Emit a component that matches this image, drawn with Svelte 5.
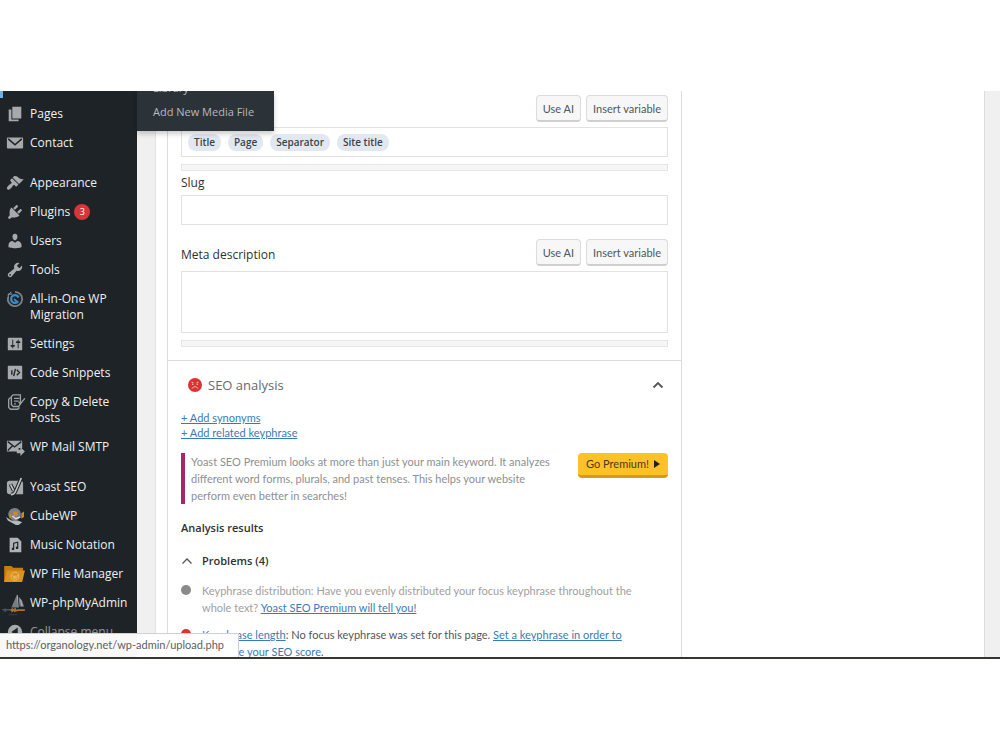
<script>
    const menu = [
        {
            label: 'Pages',
            shapes: [{ d: 'M7 2h10v13H7zM3 5h3v11h8v2H3z' }]
        },
        {
            label: 'Contact',
            shapes: [
                { d: 'M2 4h16a1 1 0 0 1 1 1v10a1 1 0 0 1-1 1H2a1 1 0 0 1-1-1V5a1 1 0 0 1 1-1z' },
                { d: 'M2.500 5.500L10 12l7.500-6.500', line: '#1d2327', width: 1.8 }
            ]
        },
        {
            label: 'Appearance',
            separated: true,
            shapes: [{ d: 'M14.48 11.06L7.41 3.99l1.5-1.5c.5-.56 2.3-.47 3.51.32 1.21.8 1.43 1.28 2.91 2.1 1.18.64 2.45 1.26 4.45.85zm-.71.71L6.7 4.7 4.93 6.47c-.39.39-.39 1.02 0 1.41l1.06 1.06c.39.39.39 1.03 0 1.42-.6.6-1.43 1.11-2.21 1.69-.35.26-.7.53-1.01.84C1.43 14.23.4 16.08 1.4 17.07c.99 1 2.84-.03 4.18-1.36.31-.31.58-.66.85-1.02.57-.78 1.08-1.61 1.69-2.21.39-.39 1.02-.39 1.41 0l1.06 1.06c.39.39 1.02.39 1.41 0z' }]
        },
        {
            label: 'Plugins',
            count: 3,
            shapes: [{ d: 'M13.11 4.36L9.87 7.6 8 5.73l3.24-3.24c.35-.34 1.05-.2 1.56.32.52.51.66 1.21.31 1.55zm-8 1.77l.91-1.12 9.01 9.01-1.19.84c-.71.71-2.63 1.16-3.82 1.16H6.14L4.9 17.26c-.59.59-1.54.59-2.12 0-.59-.58-.59-1.53 0-2.12l1.24-1.24v-3.88c0-1.13.4-3.19 1.09-3.89zm7.26 3.97l3.24-3.24c.34-.35 1.04-.21 1.55.31.52.51.66 1.21.31 1.55l-3.24 3.25z' }]
        },
        {
            label: 'Users',
            shapes: [{ d: 'M10 9.25c-2.27 0-2.73-3.44-2.73-3.44C7 4.02 7.82 2 9.97 2c2.16 0 2.98 2.02 2.71 3.81 0 0-.41 3.44-2.68 3.44zm0 2.57L12.72 10c2.39 0 4.52 2.33 4.52 4.53v2.49s-3.65 1.13-7.24 1.13c-3.65 0-7.24-1.13-7.24-1.13v-2.49c0-2.25 1.94-4.48 4.47-4.48z' }]
        },
        {
            label: 'Tools',
            shapes: [{ d: 'M16.68 9.77c-1.34 1.34-3.3 1.67-4.95.99l-5.41 6.52c-.99.99-2.59.99-3.58 0s-.99-2.59 0-3.57l6.52-5.42c-.68-1.65-.35-3.61.99-4.95 1.28-1.28 3.12-1.62 4.72-1.06l-2.89 2.89 2.82 2.82 2.86-2.87c.53 1.58.18 3.39-1.08 4.65zM3.81 16.21c.4.39 1.04.39 1.43 0 .4-.4.4-1.04 0-1.43-.39-.4-1.03-.4-1.43 0-.39.39-.39 1.03 0 1.43z' }]
        },
        {
            label: 'All-in-One WP Migration',
            shapes: [
                { d: 'M10 2a8 8 0 1 1-7.8 6.2', line: '#7d8287', width: 2 },
                { d: 'M3 5l3-3M2.500 9V4.500H7', line: '#a7aaad', width: 1 },
                { d: 'M13.500 12.500A4.300 4.300 0 1 1 14 8.500', line: '#3a8cc6', width: 2.5 },
                { d: 'M9 10l3 3', line: '#3a8cc6', width: 2 }
            ]
        },
        {
            label: 'Settings',
            shapes: [{ d: 'M18 16V4c0-.55-.45-1-1-1H3c-.55 0-1 .45-1 1v12c0 .55.45 1 1 1h14c.55 0 1-.45 1-1zM8 11h1c.55 0 1 .45 1 1s-.45 1-1 1H8v1.5c0 .28-.22.5-.5.5s-.5-.22-.5-.5V13H6c-.55 0-1-.45-1-1s.45-1 1-1h1V5.5c0-.28.22-.5.5-.5s.5.22.5.5V11zm5-2h-1c-.55 0-1-.45-1-1s.45-1 1-1h1V5.5c0-.28.22-.5.5-.5s.5.22.5.5V7h1c.55 0 1 .45 1 1s-.45 1-1 1h-1v5.5c0 .28-.22.5-.5.5s-.5-.22-.5-.5V9z' }]
        },
        {
            label: 'Code Snippets',
            shapes: [
                { d: 'M3 2h14a1 1 0 0 1 1 1v13a1 1 0 0 1-1 1H3a1 1 0 0 1-1-1V3a1 1 0 0 1 1-1z' },
                { d: 'M6.500 7v5M10.500 5.500l-2 8M12 6.500l3 3-3 3', line: '#1d2327', width: 1.5 }
            ]
        },
        {
            label: 'Copy & Delete Posts',
            shapes: [
                { d: 'M8 2h8v10l-2 3H8L6 13V4zM5 5L3 7v9l2 2h8l2-2', line: '#9ca1a6', width: 1.5 },
                { d: 'M9 6h6M9 9h5M9 12h2M14 10l2 2 5-6', line: '#9ca1a6', width: 1.5 }
            ]
        },
        {
            label: 'WP Mail SMTP',
            shapes: [
                { d: 'M1 3h17v8h-4v4H1z' },
                { d: 'M2 4l7.500 6L17 4M2 14l5-5', line: '#1d2327', width: 1.5 },
                { d: 'M12 13h4v-3l5 5-5 5v-3h-4z' }
            ]
        },
        {
            label: 'Yoast SEO',
            separated: true,
            shapes: [
                { d: 'M4 3h12a3 3 0 0 1 3 3v12H4a3 3 0 0 1-3-3V6a3 3 0 0 1 3-3z' },
                { d: 'M5 7l3.500 7M17 0l-6.500 15c-1 2.500-2 3.500-5 3.500', line: '#1d2327', width: 4 },
                { d: 'M5 7l3.500 7M17 0l-6.500 15c-1 2.500-2 3.500-5 3.500', line: '#c3c6c9', width: 1.8 }
            ]
        },
        {
            label: 'CubeWP',
            shapes: [
                { d: 'M10 1a7 7 0 1 1-1 14A7 7 0 0 1 10 1z', fill: '#7c8084' },
                { d: 'M8 5h5v5H8zM17 7l3-2v6l-3 2zM4 8h2v4H4z', fill: '#c98a2d' },
                { d: 'M0 11l6 4h7l5 2-4 3h-3l-9-5z', fill: '#b5b9bd' },
                { d: 'M7 10l4 3 5-2', line: '#e2e4e6', width: 1.4 }
            ]
        },
        {
            label: 'Music Notation',
            shapes: [
                { d: 'M4 2h9l4 4v12H4z', fill: '#b0b3b6' },
                { d: 'M8.500 14V8l4.500-1v6', line: '#1d2327', width: 1.3 },
                { d: 'M6.500 13h2.500v2.500H6.500zM11 12h2.500v2.500H11z', fill: '#1d2327' }
            ]
        },
        {
            label: 'WP File Manager',
            shapes: [
                { d: 'M-2 1h8l2 2h11v4l-3 12H-2z', fill: '#c47d14' },
                { d: 'M1 6h20l-3 13H-2z', fill: '#dc921e' },
                { d: 'M10 8a4.500 4.500 0 1 1-.1 0M7.500 11l1.500 4 1-3 1 3 2-4', line: '#efbd6c', width: 1 }
            ]
        },
        {
            label: 'WP-phpMyAdmin',
            shapes: [
                { d: 'M12 1l1 14H6zM14 3c4 3 5 7 6 11h-5z', fill: '#777d82' },
                { d: 'M12.500 1l1 14M16 6l2 8', line: '#b8bcbf', width: 1 },
                { d: 'M-4 17.500h9M-1 16v4', line: '#4b566b', width: 1.5 },
                { d: 'M5 18l2-1v2l3-2v2l3-1h8', line: '#a87430', width: 2 },
                { d: 'M3 23h10', line: '#3b4249', width: 1 }
            ]
        },
        {
            label: 'Collapse menu',
            faded: true,
            shapes: [{ d: 'M10 2a8 8 0 1 1 0 16 8 8 0 0 1 0-16zM13 5l-7 5 7 5z' }]
        }
    ];

    const variables = ['Title', 'Page', 'Separator', 'Site title'];
    let slug = '';
    let description = '';
</script>

<div class="screen">
    <div class="admin">
        <nav class="sidebar">
            <ul>
                {#each menu as item}
                    <li class:separated={item.separated} class:faded={item.faded}>
                        <a href="#menu">
                            <svg class="icon" viewBox="0 0 20 20" aria-hidden="true">
                                {#each item.shapes as shape}
                                    <path
                                        d={shape.d}
                                        fill={shape.line ? 'none' : shape.fill || '#a7aaad'}
                                        fill-rule="evenodd"
                                        stroke={shape.line || 'none'}
                                        stroke-width={shape.width || 0}
                                    />
                                {/each}
                            </svg>
                            <span class="label">{item.label}</span>
                            {#if item.count}
                                <span class="count">{item.count}</span>
                            {/if}
                        </a>
                    </li>
                {/each}
            </ul>
            <div class="active-edge"></div>
            <div class="submenu">
                <a href="#library">Library</a>
                <a href="#upload">Add New Media File</a>
            </div>
        </nav>

        <main class="content">
            <section class="metabox">
                <div class="snippet">
                    <div class="toolbar">
                        <span></span>
                        <div class="buttons">
                            <button class="tool">Use AI</button>
                            <button class="tool">Insert variable</button>
                        </div>
                    </div>
                    <div class="field tags">
                        {#each variables as variable}
                            <span class="tag">{variable}</span>
                        {/each}
                    </div>
                    <div class="meter"></div>

                    <label class="heading slug" for="slug">Slug</label>
                    <input class="field" id="slug" type="text" bind:value={slug} />

                    <div class="toolbar spaced">
                        <label class="heading" for="description">Meta description</label>
                        <div class="buttons">
                            <button class="tool">Use AI</button>
                            <button class="tool">Insert variable</button>
                        </div>
                    </div>
                    <textarea class="field" id="description" bind:value={description}></textarea>
                    <div class="meter"></div>
                </div>

                <div class="analysis">
                    <button class="collapsible">
                        <svg class="face" viewBox="0 0 14 14" aria-hidden="true">
                            <circle cx="7" cy="7" r="7" fill="#dc3232" />
                            <path d="M3.500 4l2 .8M10.500 4l-2 .8M4 10.500c1-2.300 5-2.300 6 0" fill="none" stroke="#f7c4c0" stroke-width=".9" />
                            <circle cx="4.700" cy="6.200" r=".8" fill="#f7c4c0" />
                            <circle cx="9.300" cy="6.200" r=".8" fill="#f7c4c0" />
                        </svg>
                        <span>SEO analysis</span>
                        <svg class="chevron" viewBox="0 0 12 12" aria-hidden="true">
                            <path d="M1.500 8.500L6 4l4.500 4.500" fill="none" stroke="#50575e" stroke-width="1.800" />
                        </svg>
                    </button>

                    <div class="extras">
                        <a href="#synonyms">+ Add synonyms</a>
                        <a href="#related">+ Add related keyphrase</a>
                    </div>

                    <div class="promo">
                        <p>Yoast SEO Premium looks at more than just your main keyword. It analyzes different word forms, plurals, and past tenses. This helps your website perform even better in searches!</p>
                        <a class="premium" href="#premium">
                            Go Premium!
                            <svg viewBox="0 0 6 8" aria-hidden="true"><path d="M0 0l6 4-6 4z" fill="#222" /></svg>
                        </a>
                    </div>

                    <h3>Analysis results</h3>
                    <button class="problems">
                        <svg class="chevron" viewBox="0 0 12 12" aria-hidden="true">
                            <path d="M1.500 8.500L6 4l4.500 4.500" fill="none" stroke="#50575e" stroke-width="1.300" />
                        </svg>
                        Problems (4)
                    </button>
                    <ul class="results">
                        <li class="upsell">
                            <span class="bullet"></span>
                            <p>Keyphrase distribution: Have you evenly distributed your focus keyphrase throughout the whole text? <a href="#premium">Yoast SEO Premium will tell you!</a></p>
                        </li>
                        <li>
                            <span class="bullet bad"></span>
                            <p><a href="#length">Keyphrase length</a>: No focus keyphrase was set for this page. <a href="#calculate">Set a keyphrase in order to calculate your SEO score</a>.</p>
                        </li>
                    </ul>
                </div>
            </section>
        </main>
        <div class="gutter"></div>
        <div class="status">https://organology.net/wp-admin/upload.php</div>
    </div>
</div>

<style>
    :global(body) {
        background: #fff;
    }
    .screen {
        height: 100vh;
        padding: 91px 0;
        box-sizing: border-box;
        font: 11px/16px Lato, "Open Sans", sans-serif;
        color: #50575e;
    }
    .admin {
        height: 100%;
        box-sizing: border-box;
        display: flex;
        position: relative;
        overflow: hidden;
        border-bottom: 2px solid #35362f;
        background: #f0f0f1;
    }
    ul, p, h3 {
        margin: 0;
        padding: 0;
        list-style: none;
    }
    a {
        color: #3a7bb5;
    }
    button {
        font: inherit;
        color: inherit;
        cursor: pointer;
    }
    .sidebar,
    .tag,
    .heading,
    .collapsible,
    .problems,
    h3 {
        font-family: "Open Sans", "Noto Sans", sans-serif;
    }
    .sidebar {
        flex: 0 0 137px;
        background: #1d2327;
        padding-top: 9px;
        box-sizing: border-box;
    }
    .sidebar a {
        text-decoration: none;
    }
    .sidebar li a {
        display: flex;
        gap: 6px;
        padding: 6px 4px 7px 6px;
        font-size: 12px;
        color: #f0f0f1;
    }
    .separated {
        margin-top: 11px;
    }
    .faded .label {
        opacity: .55;
    }
    .icon {
        flex: none;
        width: 18px;
        height: 18px;
        margin: -1px 0;
        overflow: visible;
    }
    .count {
        width: 16px;
        height: 16px;
        margin-left: -2px;
        border-radius: 8px;
        background: #d63638;
        font-size: 9px;
        text-align: center;
        color: #fff;
    }
    .active-edge {
        position: absolute;
        top: 0;
        left: 0;
        width: 3px;
        height: 7px;
        background: #72aee6;
    }
    .submenu {
        position: absolute;
        z-index: 2;
        top: 0;
        left: 137px;
        width: 137px;
        height: 40px;
        box-sizing: border-box;
        padding: 0 16px 11px;
        display: flex;
        flex-direction: column;
        justify-content: flex-end;
        gap: 8px;
        overflow: hidden;
        white-space: nowrap;
        background: #2c3338;
        box-shadow: 0 3px 5px rgba(0, 0, 0, .2);
    }
    .submenu a {
        color: #b4b9be;
    }
    .content {
        flex: 1;
        margin-left: 18px;
        padding: 0 302px 0 11px;
        background: #fff;
        border-left: 1px solid #e2e2e2;
    }
    .metabox {
        border: solid #dcdcde;
        border-width: 0 1px;
    }
    .gutter {
        flex: 0 0 16px;
        box-sizing: border-box;
        border-left: 1px solid #dcdcde;
    }
    .snippet {
        padding: 4px 13px 13px;
        border-bottom: 1px solid #dcdcde;
    }
    .toolbar {
        display: flex;
        align-items: center;
        justify-content: space-between;
        margin-bottom: 5px;
    }
    .spaced {
        margin-top: 14px;
    }
    .spaced .heading {
        padding-top: 4px;
    }
    .buttons {
        display: flex;
        gap: 5px;
    }
    .tool {
        height: 27px;
        padding: 1px 6px 0;
        border: 1px solid #dcdcdc;
        border-bottom: 2px solid #cfcfcf;
        border-radius: 4px;
        background: #f7f7f7;
        white-space: nowrap;
    }
    .field {
        display: block;
        width: 100%;
        height: 30px;
        box-sizing: border-box;
        border: 1px solid #e2e2e2;
        border-radius: 0;
        background: #fff;
        font: inherit;
    }
    textarea.field {
        height: 62px;
        resize: none;
    }
    .tags {
        display: flex;
        align-items: center;
        gap: 7px;
        padding: 0 6px;
    }
    .tag {
        padding: 0 6px;
        border-radius: 8px;
        background: #e2e8f0;
        font-size: 10px;
        font-weight: 600;
        line-height: 17px;
        color: #3c434a;
    }
    .meter {
        height: 7px;
        margin-top: 7px;
        box-sizing: border-box;
        border: 1px solid #e6e6e6;
        background: #f6f6f6;
    }
    .heading {
        font-size: 12px;
        font-weight: 500;
        color: #303030;
    }
    .slug {
        display: block;
        margin: 4px 0;
    }
    .analysis {
        padding: 0 13px;
    }
    .collapsible {
        display: flex;
        align-items: center;
        gap: 6px;
        width: 100%;
        height: 48px;
        margin-bottom: 1px;
        padding: 0 4px 0 7px;
        border: 0;
        background: none;
        font-size: 13px;
        color: #646970;
    }
    .face {
        width: 14px;
        height: 14px;
    }
    .chevron {
        width: 12px;
        height: 12px;
    }
    .collapsible .chevron {
        margin-left: auto;
    }
    .extras {
        display: flex;
        flex-direction: column;
        align-items: flex-start;
        line-height: 15px;
    }
    .promo {
        display: flex;
        align-items: flex-start;
        justify-content: space-between;
        gap: 14px;
        margin: 13px 0 16px;
        color: #8c8f94;
    }
    .promo p {
        flex: 1;
        padding-left: 6px;
        border-left: 4px solid #a4286a;
        line-height: 17px;
    }
    .premium {
        display: flex;
        align-items: center;
        gap: 5px;
        height: 25px;
        box-sizing: border-box;
        padding: 0 8px;
        border-bottom: 3px solid #d99a1a;
        border-radius: 4px;
        background: #fec228;
        color: #4a3a18;
        text-decoration: none;
        white-space: nowrap;
    }
    .premium svg {
        width: 6px;
        height: 8px;
    }
    h3 {
        font-size: 11px;
        line-height: 16px;
        font-weight: 600;
        color: #303030;
    }
    .problems {
        display: flex;
        align-items: center;
        gap: 9px;
        margin: 17px 0 13px;
        padding: 0;
        border: 0;
        background: none;
        font-weight: 600;
        color: #303030;
    }
    .results {
        padding-right: 20px;
    }
    .results li {
        display: flex;
        gap: 11px;
        margin-bottom: 10px;
        line-height: 17px;
    }
    .upsell {
        color: #a0a0a0;
    }
    .bullet {
        flex: none;
        width: 10px;
        height: 10px;
        margin-top: 3px;
        border-radius: 5px;
        background: #888a8c;
    }
    .bad {
        background: #dc3232;
    }
    .status {
        position: absolute;
        z-index: 3;
        left: 0;
        bottom: 0;
        padding: 3px 14px 4px 6px;
        border: solid #d0d0d0;
        border-width: 1px 1px 0 0;
        background: rgba(255, 255, 255, .97);
        color: #606060;
    }
</style>
